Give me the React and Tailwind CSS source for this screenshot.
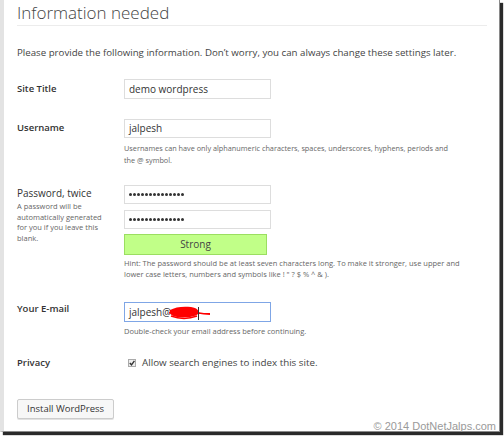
import React from "react";

const font = { fontFamily: '"Open Sans", "Noto Sans", sans-serif' };

function Input({ value, className = "" }) {
  return (
    <div className={"w-[147px] border border-[#ddd] bg-white flex items-center px-[4px] text-[10px] text-[#333] " + className}>
      {value}
    </div>
  );
}

function Dots({ className = "" }) {
  return (
    <div className={"w-[147px] h-[19px] border border-[#ddd] bg-white flex items-center px-[4px] gap-[1.5px] " + className}>
      {Array.from({ length: 14 }).map((_, i) => (
        <span key={i} className="w-[2.5px] h-[2.5px] rounded-full bg-[#333]" />
      ))}
    </div>
  );
}

export default function App() {
  return (
    <div className="w-[504px] h-[437px] bg-white relative overflow-hidden" style={font}>
      <div className="w-[500px] h-[432px] bg-white border-l-[4px] border-[#e3e3e3] border-r border-b border-r-[#8a8a8a] border-b-[#8a8a8a] shadow-[3px_3px_1px_#2a2a2a] flex flex-col pl-[13px] pr-[12px]">
        <h1 className="text-[17px] leading-[25px] font-light text-[#444] h-[26px] border-b border-[#ececec]">Information needed</h1>
        <p className="text-[9.7px] leading-[13px] text-[#444] mt-[20px]">Please provide the following information. Don’t worry, you can always change these settings later.</p>

        <div className="flex mt-[20px] items-start">
          <div className="w-[107px] shrink-0 text-[9.5px] leading-[20px] font-semibold text-[#333]">Site Title</div>
          <Input value="demo wordpress" className="h-[20px]" />
        </div>

        <div className="flex mt-[20px] items-start">
          <div className="w-[107px] shrink-0 text-[9.5px] leading-[17px] font-semibold text-[#333]">Username</div>
          <div className="flex flex-col">
            <Input value="jalpesh" className="h-[19px]" />
            <p className="text-[7.3px] leading-[12px] text-[#666] mt-[4px] w-[334px]">Usernames can have only alphanumeric characters, spaces, underscores, hyphens, periods and the @ symbol.</p>
          </div>
        </div>

        <div className="flex mt-[19px] items-start">
          <div className="w-[107px] shrink-0">
            <div className="text-[10px] leading-[16px] text-[#333]">Password, twice</div>
            <p className="text-[7.5px] leading-[10.5px] text-[#666] w-[92px]">A password will be automatically generated for you if you leave this blank.</p>
          </div>
          <div className="flex flex-col">
            <Dots />
            <Dots className="mt-[6px]" />
            <div className="mt-[5px] w-[143px] h-[21px] bg-[#c1ff88] border border-[#9bde61] flex items-center justify-center text-[10px] text-[#444]">Strong</div>
            <p className="text-[7.5px] leading-[11px] text-[#666] mt-[3px] w-[340px]">Hint: The password should be at least seven characters long. To make it stronger, use upper and lower case letters, numbers and symbols like ! " ? $ % ^ &amp; ).</p>
          </div>
        </div>

        <div className="flex mt-[22px] items-start">
          <div className="w-[107px] shrink-0 text-[9.5px] leading-[13px] font-semibold text-[#333]">Your E-mail</div>
          <div className="flex flex-col">
            <div className="w-[147px] h-[20px] border border-[#7fa6e6] bg-white flex items-center px-[4px] text-[10px] text-[#333] relative">
              jalpesh@
              <svg className="absolute left-[42px] top-[2px]" width="44" height="16" viewBox="0 0 44 16">
                <path d="M3 5 C8 2 16 1 24 2 C30 3 33 6 31 9 C28 12 18 13 10 12 C5 11 2 9 3 5 Z" fill="#f00" />
                <path d="M2 8 C10 6 20 6 32 8 C36 9 40 9 43 9" stroke="#f00" strokeWidth="1.8" fill="none" />
                <path d="M4 11 C12 14 22 14 30 11" stroke="#f00" strokeWidth="1.5" fill="none" />
                <line x1="31.5" y1="2" x2="31.5" y2="15" stroke="#333" strokeWidth="1" />
              </svg>
            </div>
            <p className="text-[7.5px] leading-[11px] text-[#666] mt-[4px]">Double-check your email address before continuing.</p>
          </div>
        </div>

        <div className="flex mt-[19px] items-center h-[14px]">
          <div className="w-[107px] shrink-0 text-[9.5px] font-semibold text-[#333]">Privacy</div>
          <div className="flex items-center gap-[6px] pl-[4px]">
            <span className="w-[8px] h-[8px] border border-[#aaa] bg-[#eee] flex items-center justify-center">
              <svg width="6" height="6" viewBox="0 0 6 6"><path d="M0.8 3 L2.5 4.8 L5.4 0.8" stroke="#333" strokeWidth="1.4" fill="none" /></svg>
            </span>
            <span className="text-[9.8px] text-[#444]">Allow search engines to index this site.</span>
          </div>
        </div>

        <div className="mt-[24px]">
          <div className="inline-flex items-center h-[20px] px-[9px] border border-[#ccc] bg-[#f7f7f7] text-[9.5px] text-[#333] rounded-[2px] shadow-[0_1px_0_#e2e2e2]">Install WordPress</div>
        </div>
      </div>
      <div className="absolute right-[8px] bottom-[5px] text-[11px] leading-[12px] text-[#9a9a9a]" style={{ fontFamily: '"Liberation Sans", Arial, sans-serif' }}>© 2014 DotNetJalps.com</div>
    </div>
  );
}
